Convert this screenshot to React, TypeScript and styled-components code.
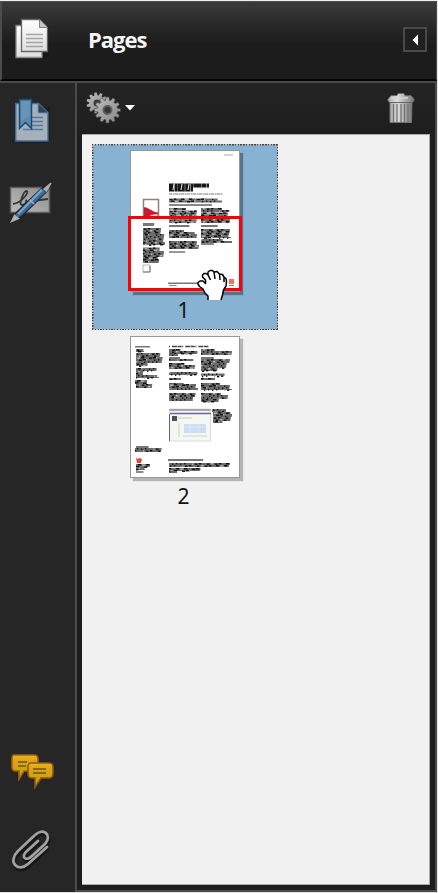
import React from "react";
import styled, { createGlobalStyle } from "styled-components";

const GlobalStyle = createGlobalStyle`
  *, *::before, *::after { box-sizing: border-box; }
  body { margin: 0; background: #fff; font-family: "Noto Sans", "Open Sans", sans-serif; }
  svg { display: block; }
`;

const Window = styled.div`
  width: 438px;
  height: 893px;
  display: flex;
  flex-direction: column;
  background: #262626;
  border-top: 1px solid #eef0ef;
  border-right: 1px solid #e4e4e4;
  border-bottom: 1px solid #e0e0e0;
  overflow: hidden;
`;

const Header = styled.header`
  height: 80px;
  flex: none;
  display: flex;
  align-items: center;
  border: solid #4c4c4c;
  border-width: 1px 1px 0 2px;
  border-bottom: 2px solid #050505;
  background: linear-gradient(#3b3b3b, #292929 30%, #1c1c1c 55%, #1b1b1b);
`;

const HeaderIcon = styled.div`
  width: 86px;
  padding: 0 0 2px 13px;
`;

const Title = styled.h1`
  flex: 1;
  margin: 0;
  padding-bottom: 4px;
  font: 700 22px/30px "Open Sans", "Noto Sans", sans-serif;
  letter-spacing: -1px;
  color: #f5f5f5;
`;

const CollapseButton = styled.button`
  width: 24px;
  height: 25px;
  margin: 0 9px 2px 0;
  padding: 0;
  display: grid;
  place-items: center;
  border: 2px solid #4a4a4a;
  background: #202020;
`;

const Body = styled.div`
  flex: 1;
  min-height: 0;
  display: flex;
  border-top: 2px solid #4a4a4a;
`;

const Rail = styled.nav`
  width: 75px;
  flex: none;
  display: flex;
  flex-direction: column;
  background: #262626;
`;

const RailButton = styled.button<{ $h: number; $push?: boolean; $left?: number; $lift?: number }>`
  height: ${(p) => p.$h}px;
  margin: ${(p) => (p.$push ? "auto" : "0")} 0 0;
  padding: 0 0 ${(p) => p.$lift ?? 0}px ${(p) => p.$left ?? 8}px;
  border: 0;
  background: none;
  text-align: left;
`;

const Panel = styled.section`
  flex: 1;
  display: flex;
  flex-direction: column;
  border: 2px solid #4b4b4b;
  border-top: 0;
  background: #1e1e1e;
`;

const Toolbar = styled.div`
  height: 51px;
  flex: none;
  display: flex;
  align-items: center;
  justify-content: space-between;
  padding: 0 20px 1px 8px;
  background: linear-gradient(#242424, #1e1e1e);
`;

const ToolButton = styled.button`
  padding: 0;
  border: 0;
  background: none;
  display: flex;
  align-items: center;
`;

const Pages = styled.div`
  flex: 1;
  min-height: 0;
  margin: 0 5px 5px;
  padding: 9px 0 0 10px;
  background: #f1f1f1;
  border: solid #aaa;
  border-width: 1px 1px 1px 0;
`;

const dots = (angle: string) =>
  `repeating-linear-gradient(${angle}, #59443a 0 1.4px, #a9bfd0 1.4px 2.75px)`;

const PageItem = styled.figure<{ $selected?: boolean }>`
  width: 186px;
  height: 186px;
  margin: 0;
  padding: 6px 0 0 38px;
  ${(p) =>
    p.$selected &&
    `background:
      ${dots("90deg")} 0 0 / 100% 1.5px no-repeat,
      ${dots("90deg")} 0 100% / 100% 1.5px no-repeat,
      ${dots("180deg")} 0 0 / 1.5px 100% no-repeat,
      ${dots("180deg")} 100% 0 / 1.5px 100% no-repeat,
      #88b2d1;`}
`;

const Sheet = styled.div<{ $shadow: string }>`
  position: relative;
  width: 110px;
  height: 142px;
  background: #fff;
  border: 1px solid #989898;
  box-shadow: 3px 3px 1px ${(p) => p.$shadow};
`;

const Viewport = styled.div`
  position: absolute;
  left: -3px;
  top: 65px;
  width: 114px;
  height: 75px;
  border: 3px solid #fb0007;
`;

const HandHolder = styled.div`
  position: absolute;
  left: 66px;
  top: 118px;
`;

const Caption = styled.figcaption`
  width: 107px;
  margin-top: 4px;
  font-size: 21px;
  line-height: 29px;
  text-align: center;
  color: #111;
`;

type Block = [x: number, y: number, x2: number, y2: number, tone?: string];

function TextBlocks({ blocks }: { blocks: Block[] }) {
  const parts: React.ReactNode[] = [];
  blocks.forEach(([x, y, x2, y2, tone = "#6c6c6c"], b) => {
    let row = 0;
    for (let ly = y; ly < y2; ly += 2) {
      const trim = ((row * 7 + b * 5) % 6) * ((x2 - x) / 60);
      const h = Math.min(2.1, y2 - ly);
      parts.push(<rect key={`${b}-${row}`} x={x} y={ly} width={x2 - x - trim} height={h} fill={tone} />);
      if (tone === "#6c6c6c") {
        for (let k = 0; k < (x2 - x) / 5; k++) {
          const s = (k * 37 + row * 23 + b * 13) % 17;
          const dx = x + k * 5 + (s % 4);
          if (dx + 3 < x2 - trim)
            parts.push(<rect key={`${b}-${row}-${k}`} x={dx} y={ly + (s % 2) * 0.5} width={1.3 + (s % 3)} height={1.4} fill={s % 5 === 0 ? "#b4b4b4" : "#101010"} />);
        }
      }
      row++;
    }
  });
  return <>{parts}</>;
}

const pageOne: Block[] = [
  [93, 3.5, 102, 4.5, "#aaa"],
  [38, 47.5, 91, 51.5], [38, 53, 84, 55, "#888"],
  [38, 57, 56, 59], [38, 59.5, 67, 64], [38, 64.5, 67, 72],
  [70, 57, 91, 59], [70, 59, 101, 61], [70, 61.5, 99, 66], [70, 66, 101, 72],
  [38, 74, 59, 76, "#777"], [70, 74, 87, 76, "#777"],
  [38, 79, 53, 81], [38, 81, 66, 87], [38, 90, 68, 98], [38, 100, 55, 102, "#999"],
  [70, 78, 100, 87], [70, 88, 92, 90], [70, 90, 101, 92], [70, 92, 84, 94, "#888"],
  [12, 72, 24, 75, "#777"], [12, 77, 31, 83], [12, 83, 34, 94],
  [12, 96.5, 29, 100], [12, 100, 33, 106], [12, 106, 28, 112],
  [37, 131.5, 70, 133, "#777"], [38, 134, 46, 135, "#888"],
];

const pageTwo: Block[] = [
  [4, 9, 19, 10.5, "#777"], [5, 12, 13, 15], [5, 16, 31, 20], [5, 20, 33, 26], [5, 26, 17, 29],
  [5, 31, 26, 34], [5, 34, 12, 38], [5, 38, 28, 41], [4, 43, 17, 47], [5, 47, 22, 51],
  [38, 12, 50, 14], [38, 14, 67, 17], [38, 17, 47, 19],
  [38, 20, 50, 22, "#777"], [38, 22, 64, 24], [38, 26, 54, 28], [38, 28, 65, 32],
  [38, 35, 67, 38], [38, 41, 50, 43], [38, 46, 54, 48], [38, 47, 67, 53], [38, 56, 66, 60], [38, 60, 63, 64],
  [70, 12, 84, 14], [70, 14, 101, 18], [70, 20, 84, 22, "#777"], [70, 22, 101, 26],
  [70, 26, 97, 31], [70, 31, 87, 34], [70, 36.5, 94, 39], [70, 41, 84, 43],
  [70, 46, 91, 48], [70, 48, 101, 53], [70, 56, 91, 58], [70, 58, 98, 62], [70, 62, 88, 65],
  [81, 72, 95, 75], [82, 75, 101, 80], [82, 80, 101, 84], [82, 84, 92, 86],
  [5, 109, 18, 111, "#777"], [4, 111, 31, 115], [5, 127, 19, 130], [5, 130, 14, 133], [5, 134, 13, 136, "#888"],
  [37, 122, 74, 124, "#777"], [38, 126, 101, 130], [38, 131, 70, 134], [38, 134, 46, 136],
];

function PageOneArt() {
  return (
    <svg width="108" height="140" viewBox="0 0 108 140">
      <path d="M38 34.500H78M38 38.500H62" stroke="#171717" strokeWidth="4" strokeDasharray="5 .5 3 .3 7 .4" />
      <path d="M43 33l-1 6M51 33l-1 6M58 33l-1 6M66 37.500h12" stroke="#eee" strokeWidth="1" />
      <path d="M38 43H92" stroke="#777" strokeWidth="1.200" strokeDasharray="3 .6 2 .4" />
      <TextBlocks blocks={pageOne} />
      <rect x="12.500" y="48.500" width="15" height="18" fill="#fff" stroke="#8b8180" strokeWidth="1.500" />
      <path d="M13 56.500c4-1 6 4 14 5v5H13z" fill="#cf1731" />
      <path d="M19.500 66v-2l7-1v3z" fill="#f5dfe0" />
      <rect x="12" y="114" width="7" height="7" fill="#f9f9f9" stroke="#bbb" />
      <path d="M12 121h7v-6" fill="none" stroke="#777" />
      <path d="M98 128h5v5h-5z" fill="#ee7358" />
      <path d="M98 134.500h5" stroke="#777" />
    </svg>
  );
}

function PageTwoArt() {
  return (
    <svg width="108" height="140" viewBox="0 0 108 140">
      <path d="M38 9.500H78" stroke="#444" strokeWidth="1.500" strokeDasharray="1 2 5 .6 4 .6" />
      <TextBlocks blocks={pageTwo} />
      <rect x="38.500" y="72" width="41" height="32" fill="#f5f7f3" stroke="#ddd" />
      <path d="M38.500 73h41" stroke="#8a8e96" strokeWidth="1.500" />
      <path d="M39 76.500h41" stroke="#7562a4" strokeWidth="1.400" />
      <path d="M41 79h5v5h-5z" fill="#4c5054" />
      <path d="M47 81h14" stroke="#dfe4c8" strokeWidth="2" />
      <path d="M53 87h22v9H53z" fill="#cbdcf3" />
      <path d="M48 86v14M52 99h24" stroke="#e1e6da" strokeWidth="2" />
      <path d="M52 90h24M59 87v13M68 87v13" stroke="#e5edf7" strokeWidth=".7" />
      <path d="M38.500 77v27" stroke="#65696d" />
      <path d="M5 121l2 1 1.500-1 2.500 1-1 4H6z" fill="#e4472f" />
    </svg>
  );
}

function Hand() {
  return (
    <svg width="32" height="33" viewBox="0 0 32 33">
      <path
        d="M11 31v-4l-3-3-2-4-3.500-2.500L1 15v-1.500L3 12h3l2.500 2.500V11L5.500 8V6L7 4.500h2l2 1.500V3l2-1.500h2.500L17.500 3 20 2.500l2.500 2.500 3 .5L27 8l2 1 .5 3-.5 5-2.500 4-1 5-1.500 5z"
        fill="#fff"
      />
      <path
        d="M11 31v-4l-3-3-2-4-3.500-2.500L1 15v-1.500L3 12h3l2.500 2.500V11L5.500 8V6L7 4.500h2l2 1.500 2.500 5M11 6V3l2-1.500h2.500L17 3l1 7M17.500 3 20 2.500 22.500 5l.5 6M22.500 5l3 .5L27 8v5M27 8l2 1.500.5 3L29 17l-2.500 4-1 5-1.500 5"
        fill="none" stroke="#000" strokeWidth="1.500" strokeLinejoin="round"
      />
    </svg>
  );
}

function DocumentsIcon() {
  return (
    <svg width="38" height="44" viewBox="0 0 38 44">
      <defs>
        <linearGradient id="paper" x2="0" y2="1"><stop stopColor="#fff" /><stop offset="1" stopColor="#dedede" /></linearGradient>
      </defs>
      <path d="M5 8h29v28l-4 5H5z" fill="#111" opacity=".5" />
      <path d="M1 7.500h26v32H1z" fill="url(#paper)" stroke="#888" strokeWidth="1.300" />
      <path d="M6.500 1.500h18l8 8v24h-26z" fill="url(#paper)" stroke="#666" strokeWidth="1.300" />
      <path d="M24.500 1.500v8h8" fill="#c6c6c6" stroke="#808080" />
      <path d="M11 16.500h17M11 20.500h17M11 24.500h17M11 28.500h17" stroke="#a5a5a5" strokeWidth="1.500" />
    </svg>
  );
}

function BookmarkIcon() {
  return (
    <svg width="38" height="46" viewBox="7 -1 38 46">
      <path d="M11 8h31v33l-3 3H11z" fill="#151515" opacity=".5" />
      <path d="M7.700 4.500h22.800l9.500 9v28.500H7.700z" fill="#a5b0bb" stroke="#416d91" strokeWidth="1.400" />
      <path d="M30 4.500v9.500h10" fill="#28445c" stroke="#7390a7" />
      <path d="M24 18.500h11M24 22.500h11M24 26.500h11M15 30.500h20" stroke="#56799b" strokeWidth="1.500" />
      <path d="M11.500.500h12v29l-6-6-6 6z" fill="#5d8bb0" stroke="#174c76" strokeWidth="1.500" />
      <path d="M13 2h9v15l-9 5z" fill="#79a1c0" opacity=".4" />
    </svg>
  );
}

function SignatureIcon() {
  return (
    <svg width="48" height="44" viewBox="0 0 48 44">
      <defs><linearGradient id="card" x1="0" y1="1" x2="1" y2="0"><stop stopColor="#bcbcbc" /><stop offset="1" stopColor="#8c8c8c" /></linearGradient></defs>
      <path d="M2.500 6.500h39v25h-39z" fill="url(#card)" stroke="#5b5b5b" strokeWidth="1.500" />
      <path d="M5 23c9-1 16-12 14-13-3-1-9 14-5 14 5 0 5-7 4-4s10-1 14-1l8-1" fill="none" stroke="#353535" strokeWidth="1.800" />
      <path d="M4 41l4-9L34 7l10-6-5 9-26 26z" fill="#282828" stroke="#222" strokeWidth="1.500" />
      <path d="M7 34L33 7l5 4-25 24-6 3z" fill="#386b98" />
      <path d="M10 33L34 9" stroke="#7da7ca" strokeWidth="2" />
      <path d="M3.500 40.500l3-6 4 3zM36 8l7-6-4.500 8zM22 19l4 4" fill="#bbb" stroke="#aaa" strokeWidth="1.500" />
    </svg>
  );
}

function CommentsIcon() {
  return (
    <svg width="46" height="38" viewBox="0 0 46 38">
      <defs><linearGradient id="bubble" x2="0" y2="1"><stop stopColor="#e6b81b" /><stop offset=".25" stopColor="#dda21b" /><stop offset=".6" stopColor="#c9a514" /><stop offset="1" stopColor="#b8a012" /></linearGradient></defs>
      <path d="M6 2h20q4 0 4 4v8q0 4-4 4H16l-5 8v-8H8q-4 0-4-4V6q0-4 2-4z" fill="url(#bubble)" stroke="#a76010" strokeWidth="1.600" />
      <path d="M10 9h9M10 13h8" stroke="#76530c" strokeWidth="1.600" />
      <path d="M23 10h18q4 0 4 4v6q0 5-4 5h-8l-6 9v-9h-3q-4 0-4-5v-6q0-4 3-4z" fill="url(#bubble)" stroke="#985514" strokeWidth="1.600" />
      <path d="M25 16h13M25 20h13" stroke="#6e540e" strokeWidth="1.700" />
    </svg>
  );
}

function PaperclipIcon() {
  return (
    <svg width="44" height="46" viewBox="0 0 44 46" fill="none" strokeLinecap="round" strokeLinejoin="round">
      <path d="M29 15L18 25c-7 6-1 11 5 5l13-12c8-9-2-17-10-9L9 25C-2 36 9 47 19 38l18-17" stroke="#171717" strokeWidth="3.500" transform="translate(1 1.500)" />
      <path d="M29 14L18 24c-7 6-1 11 5 5l13-12c8-9-2-17-10-9L9 24C-2 35 9 46 19 37l19-17" stroke="#a2a2a2" strokeWidth="2.700" />
    </svg>
  );
}

function gearPath(cx: number, cy: number, outer: number, inner: number, teeth: number) {
  const points: string[] = [];
  for (let i = 0; i < teeth; i++) {
    [[-0.36, inner], [-0.2, outer], [0.2, outer], [0.36, inner]].forEach(([offset, radius]) => {
      const a = ((i + offset) / teeth) * Math.PI * 2;
      points.push(`${(cx + Math.cos(a) * radius).toFixed(2)} ${(cy + Math.sin(a) * radius).toFixed(2)}`);
    });
  }
  return `M${points.join("L")}Z`;
}

function GearsIcon() {
  return (
    <svg width="36" height="34" viewBox="0 0 36 34">
      <defs><linearGradient id="steel" x2="1" y2="1"><stop stopColor="#bdbdbd" /><stop offset="1" stopColor="#858585" /></linearGradient></defs>
      <path d={gearPath(12, 12, 10.5, 7.8, 11)} fill="url(#steel)" />
      <circle cx="12" cy="12" r="3.500" fill="#3a3a3a" />
      <path d={gearPath(22.5, 19, 13, 10, 12)} fill="url(#steel)" stroke="#4a4a4a" strokeWidth=".6" />
      <circle cx="22.500" cy="19" r="5" fill="#5e5e5e" />
      <circle cx="22.500" cy="19" r="3" fill="#343434" />
    </svg>
  );
}

function TrashIcon() {
  return (
    <svg width="28" height="32" viewBox="0 0 28 32">
      <defs><linearGradient id="can"><stop stopColor="#aaa" /><stop offset=".35" stopColor="#dedede" /><stop offset="1" stopColor="#777" /></linearGradient></defs>
      <path d="M3 9h22l-.5 21.500H3z" fill="url(#can)" stroke="#757575" />
      <path d="M6.500 12v18M10 12v18M14 12v18M17.500 12v18M21 12v18" stroke="#737373" strokeWidth="1.300" />
      <path d="M1 9V7l3-3.500h6l1-2h6l1 2h6L27 7v2l-2 1.500H3z" fill="url(#can)" stroke="#666" />
      <path d="M4 6h17" stroke="#d5d5d5" strokeWidth="1.500" />
    </svg>
  );
}

export default function App() {
  return (
    <>
      <GlobalStyle />
      <Window>
        <Header>
          <HeaderIcon><DocumentsIcon /></HeaderIcon>
          <Title>Pages</Title>
          <CollapseButton aria-label="Collapse panel">
            <svg width="8" height="12" viewBox="0 0 8 12"><path d="M7 .5v11L1.500 6z" fill="#fff" /></svg>
          </CollapseButton>
        </Header>
        <Body>
          <Rail>
            <RailButton $h={78} $left={15} $lift={2} aria-label="Bookmarks"><BookmarkIcon /></RailButton>
            <RailButton $h={83} aria-label="Signatures"><SignatureIcon /></RailButton>
            <RailButton $h={78} $push aria-label="Comments"><CommentsIcon /></RailButton>
            <RailButton $h={81} $left={9} $lift={4} aria-label="Attachments"><PaperclipIcon /></RailButton>
          </Rail>
          <Panel>
            <Toolbar>
              <ToolButton aria-label="Options">
                <GearsIcon />
                <svg width="14" height="8" viewBox="0 0 14 8"><path d="M4 1h10L9 6.500z" fill="#fff" /></svg>
              </ToolButton>
              <ToolButton aria-label="Delete page"><TrashIcon /></ToolButton>
            </Toolbar>
            <Pages>
              <PageItem $selected>
                <Sheet $shadow="#55758c">
                  <PageOneArt />
                  <Viewport />
                  <HandHolder><Hand /></HandHolder>
                </Sheet>
                <Caption>1</Caption>
              </PageItem>
              <PageItem>
                <Sheet $shadow="#b5b5b5"><PageTwoArt /></Sheet>
                <Caption>2</Caption>
              </PageItem>
            </Pages>
          </Panel>
        </Body>
      </Window>
    </>
  );
}
